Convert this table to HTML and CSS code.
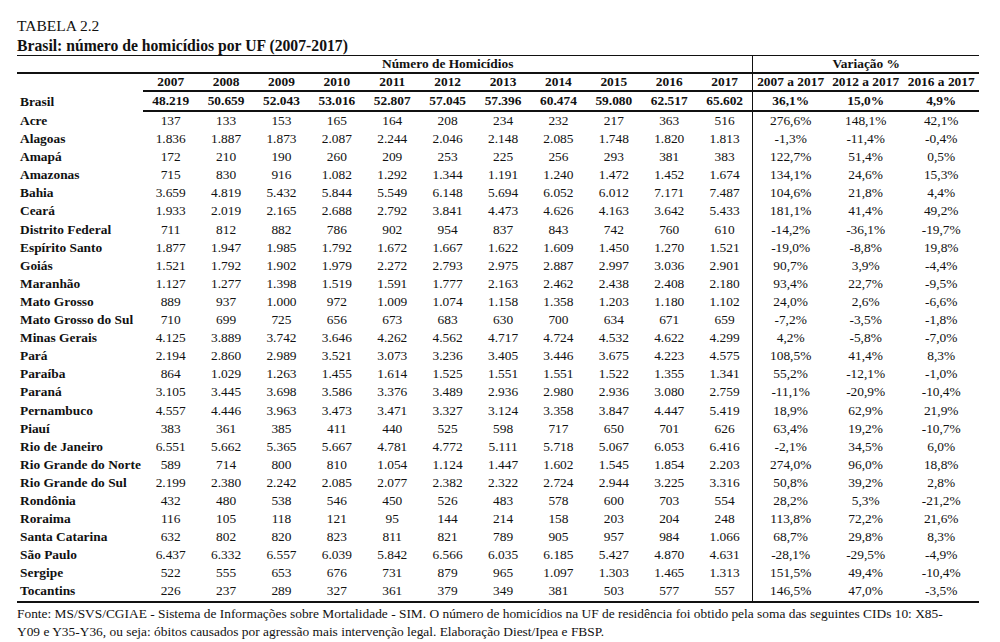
FILE: index.html
```html
<!DOCTYPE html>
<html lang="pt-BR">
<head>
<meta charset="utf-8">
<title>Tabela 2.2</title>
<link rel="stylesheet" href="styles.css">
</head>
<body>
<div class="page">
  <div class="caption">TABELA 2.2</div>
  <div class="title">Brasil: número de homicídios por UF (2007-2017)</div>
  <table class="data">
    <colgroup>
      <col class="c-label">
      <col class="c-year"><col class="c-year"><col class="c-year"><col class="c-year"><col class="c-year"><col class="c-year"><col class="c-year"><col class="c-year"><col class="c-year"><col class="c-year"><col class="c-year">
      <col class="c-var"><col class="c-var"><col class="c-var">
    </colgroup>
    <thead>
      <tr class="group">
        <th></th>
        <th colspan="11">Número de Homicídios</th>
        <th colspan="3" class="sep">Variação %</th>
      </tr>
      <tr class="years">
        <th class="nob"></th>
        <th>2007</th><th>2008</th><th>2009</th><th>2010</th><th>2011</th><th>2012</th><th>2013</th><th>2014</th><th>2015</th><th>2016</th><th>2017</th>
        <th class="sep">2007 a 2017</th><th>2012 a 2017</th><th>2016 a 2017</th>
      </tr>
    </thead>
    <tbody>
      <tr class="total"><td class="lbl">Brasil</td><td>48.219</td><td>50.659</td><td>52.043</td><td>53.016</td><td>52.807</td><td>57.045</td><td>57.396</td><td>60.474</td><td>59.080</td><td>62.517</td><td>65.602</td><td class="sep">36,1%</td><td>15,0%</td><td>4,9%</td></tr>
      <tr><td class="lbl">Acre</td><td>137</td><td>133</td><td>153</td><td>165</td><td>164</td><td>208</td><td>234</td><td>232</td><td>217</td><td>363</td><td>516</td><td class="sep">276,6%</td><td>148,1%</td><td>42,1%</td></tr>
      <tr><td class="lbl">Alagoas</td><td>1.836</td><td>1.887</td><td>1.873</td><td>2.087</td><td>2.244</td><td>2.046</td><td>2.148</td><td>2.085</td><td>1.748</td><td>1.820</td><td>1.813</td><td class="sep">-1,3%</td><td>-11,4%</td><td>-0,4%</td></tr>
      <tr><td class="lbl">Amapá</td><td>172</td><td>210</td><td>190</td><td>260</td><td>209</td><td>253</td><td>225</td><td>256</td><td>293</td><td>381</td><td>383</td><td class="sep">122,7%</td><td>51,4%</td><td>0,5%</td></tr>
      <tr><td class="lbl">Amazonas</td><td>715</td><td>830</td><td>916</td><td>1.082</td><td>1.292</td><td>1.344</td><td>1.191</td><td>1.240</td><td>1.472</td><td>1.452</td><td>1.674</td><td class="sep">134,1%</td><td>24,6%</td><td>15,3%</td></tr>
      <tr><td class="lbl">Bahia</td><td>3.659</td><td>4.819</td><td>5.432</td><td>5.844</td><td>5.549</td><td>6.148</td><td>5.694</td><td>6.052</td><td>6.012</td><td>7.171</td><td>7.487</td><td class="sep">104,6%</td><td>21,8%</td><td>4,4%</td></tr>
      <tr><td class="lbl">Ceará</td><td>1.933</td><td>2.019</td><td>2.165</td><td>2.688</td><td>2.792</td><td>3.841</td><td>4.473</td><td>4.626</td><td>4.163</td><td>3.642</td><td>5.433</td><td class="sep">181,1%</td><td>41,4%</td><td>49,2%</td></tr>
      <tr><td class="lbl">Distrito Federal</td><td>711</td><td>812</td><td>882</td><td>786</td><td>902</td><td>954</td><td>837</td><td>843</td><td>742</td><td>760</td><td>610</td><td class="sep">-14,2%</td><td>-36,1%</td><td>-19,7%</td></tr>
      <tr><td class="lbl">Espírito Santo</td><td>1.877</td><td>1.947</td><td>1.985</td><td>1.792</td><td>1.672</td><td>1.667</td><td>1.622</td><td>1.609</td><td>1.450</td><td>1.270</td><td>1.521</td><td class="sep">-19,0%</td><td>-8,8%</td><td>19,8%</td></tr>
      <tr><td class="lbl">Goiás</td><td>1.521</td><td>1.792</td><td>1.902</td><td>1.979</td><td>2.272</td><td>2.793</td><td>2.975</td><td>2.887</td><td>2.997</td><td>3.036</td><td>2.901</td><td class="sep">90,7%</td><td>3,9%</td><td>-4,4%</td></tr>
      <tr><td class="lbl">Maranhão</td><td>1.127</td><td>1.277</td><td>1.398</td><td>1.519</td><td>1.591</td><td>1.777</td><td>2.163</td><td>2.462</td><td>2.438</td><td>2.408</td><td>2.180</td><td class="sep">93,4%</td><td>22,7%</td><td>-9,5%</td></tr>
      <tr><td class="lbl">Mato Grosso</td><td>889</td><td>937</td><td>1.000</td><td>972</td><td>1.009</td><td>1.074</td><td>1.158</td><td>1.358</td><td>1.203</td><td>1.180</td><td>1.102</td><td class="sep">24,0%</td><td>2,6%</td><td>-6,6%</td></tr>
      <tr><td class="lbl">Mato Grosso do Sul</td><td>710</td><td>699</td><td>725</td><td>656</td><td>673</td><td>683</td><td>630</td><td>700</td><td>634</td><td>671</td><td>659</td><td class="sep">-7,2%</td><td>-3,5%</td><td>-1,8%</td></tr>
      <tr><td class="lbl">Minas Gerais</td><td>4.125</td><td>3.889</td><td>3.742</td><td>3.646</td><td>4.262</td><td>4.562</td><td>4.717</td><td>4.724</td><td>4.532</td><td>4.622</td><td>4.299</td><td class="sep">4,2%</td><td>-5,8%</td><td>-7,0%</td></tr>
      <tr><td class="lbl">Pará</td><td>2.194</td><td>2.860</td><td>2.989</td><td>3.521</td><td>3.073</td><td>3.236</td><td>3.405</td><td>3.446</td><td>3.675</td><td>4.223</td><td>4.575</td><td class="sep">108,5%</td><td>41,4%</td><td>8,3%</td></tr>
      <tr><td class="lbl">Paraíba</td><td>864</td><td>1.029</td><td>1.263</td><td>1.455</td><td>1.614</td><td>1.525</td><td>1.551</td><td>1.551</td><td>1.522</td><td>1.355</td><td>1.341</td><td class="sep">55,2%</td><td>-12,1%</td><td>-1,0%</td></tr>
      <tr><td class="lbl">Paraná</td><td>3.105</td><td>3.445</td><td>3.698</td><td>3.586</td><td>3.376</td><td>3.489</td><td>2.936</td><td>2.980</td><td>2.936</td><td>3.080</td><td>2.759</td><td class="sep">-11,1%</td><td>-20,9%</td><td>-10,4%</td></tr>
      <tr><td class="lbl">Pernambuco</td><td>4.557</td><td>4.446</td><td>3.963</td><td>3.473</td><td>3.471</td><td>3.327</td><td>3.124</td><td>3.358</td><td>3.847</td><td>4.447</td><td>5.419</td><td class="sep">18,9%</td><td>62,9%</td><td>21,9%</td></tr>
      <tr><td class="lbl">Piauí</td><td>383</td><td>361</td><td>385</td><td>411</td><td>440</td><td>525</td><td>598</td><td>717</td><td>650</td><td>701</td><td>626</td><td class="sep">63,4%</td><td>19,2%</td><td>-10,7%</td></tr>
      <tr><td class="lbl">Rio de Janeiro</td><td>6.551</td><td>5.662</td><td>5.365</td><td>5.667</td><td>4.781</td><td>4.772</td><td>5.111</td><td>5.718</td><td>5.067</td><td>6.053</td><td>6.416</td><td class="sep">-2,1%</td><td>34,5%</td><td>6,0%</td></tr>
      <tr><td class="lbl">Rio Grande do Norte</td><td>589</td><td>714</td><td>800</td><td>810</td><td>1.054</td><td>1.124</td><td>1.447</td><td>1.602</td><td>1.545</td><td>1.854</td><td>2.203</td><td class="sep">274,0%</td><td>96,0%</td><td>18,8%</td></tr>
      <tr><td class="lbl">Rio Grande do Sul</td><td>2.199</td><td>2.380</td><td>2.242</td><td>2.085</td><td>2.077</td><td>2.382</td><td>2.322</td><td>2.724</td><td>2.944</td><td>3.225</td><td>3.316</td><td class="sep">50,8%</td><td>39,2%</td><td>2,8%</td></tr>
      <tr><td class="lbl">Rondônia</td><td>432</td><td>480</td><td>538</td><td>546</td><td>450</td><td>526</td><td>483</td><td>578</td><td>600</td><td>703</td><td>554</td><td class="sep">28,2%</td><td>5,3%</td><td>-21,2%</td></tr>
      <tr><td class="lbl">Roraima</td><td>116</td><td>105</td><td>118</td><td>121</td><td>95</td><td>144</td><td>214</td><td>158</td><td>203</td><td>204</td><td>248</td><td class="sep">113,8%</td><td>72,2%</td><td>21,6%</td></tr>
      <tr><td class="lbl">Santa Catarina</td><td>632</td><td>802</td><td>820</td><td>823</td><td>811</td><td>821</td><td>789</td><td>905</td><td>957</td><td>984</td><td>1.066</td><td class="sep">68,7%</td><td>29,8%</td><td>8,3%</td></tr>
      <tr><td class="lbl">São Paulo</td><td>6.437</td><td>6.332</td><td>6.557</td><td>6.039</td><td>5.842</td><td>6.566</td><td>6.035</td><td>6.185</td><td>5.427</td><td>4.870</td><td>4.631</td><td class="sep">-28,1%</td><td>-29,5%</td><td>-4,9%</td></tr>
      <tr><td class="lbl">Sergipe</td><td>522</td><td>555</td><td>653</td><td>676</td><td>731</td><td>879</td><td>965</td><td>1.097</td><td>1.303</td><td>1.465</td><td>1.313</td><td class="sep">151,5%</td><td>49,4%</td><td>-10,4%</td></tr>
      <tr class="last"><td class="lbl">Tocantins</td><td>226</td><td>237</td><td>289</td><td>327</td><td>361</td><td>379</td><td>349</td><td>381</td><td>503</td><td>577</td><td>557</td><td class="sep">146,5%</td><td>47,0%</td><td>-3,5%</td></tr>
    </tbody>
  </table>
  <p class="source">Fonte: MS/SVS/CGIAE - Sistema de Informações sobre Mortalidade - SIM. O número de homicídios na UF de residência foi obtido pela soma das seguintes CIDs 10: X85-<br>Y09 e Y35-Y36, ou seja: óbitos causados por agressão mais intervenção legal. Elaboração Diest/Ipea e FBSP.</p>
</div>
</body>
</html>
```

FILE: styles.css
```css
html, body {
  margin: 0;
  padding: 0;
  background: #ffffff;
}

body {
  color: #111111;
  font-family: "Liberation Serif", "Times New Roman", serif;
}

.page {
  padding: 16px 0 0 17px;
}

.caption {
  font-size: 15.5px;
  line-height: 20px;
}

.title {
  font-size: 15.7px;
  font-weight: bold;
  line-height: 19px;
}

.data {
  border-collapse: separate;
  border-spacing: 0;
  table-layout: fixed;
  width: 962px;
  font-size: 13.4px;
}

.c-label { width: 126px; }
.c-year { width: 55.4px; }
.c-var { width: 75.5px; }

.data th,
.data td {
  padding: 0;
  text-align: center;
  white-space: nowrap;
  vertical-align: middle;
}

.data th {
  font-weight: bold;
  line-height: 16px;
}

.group th {
  border-top: 1px solid #111111;
  border-bottom: 2px solid #111111;
}

.years th {
  border-bottom: 2px solid #111111;
}

.years th.nob {
  border-bottom: none;
}

.data td {
  line-height: 18.1px;
}

.data td.lbl {
  text-align: left;
  padding-left: 3px;
  font-weight: bold;
}

.total td {
  font-weight: bold;
  line-height: 18px;
  border-bottom: 2px solid #111111;
}

.total td.lbl {
  border-bottom: none;
}

.last td {
  border-bottom: 2px solid #111111;
}

.data .sep {
  border-left: 1.5px solid #111111;
}

.source {
  margin: 2px 0 0 0;
  font-size: 13.4px;
  line-height: 18px;
}
```
